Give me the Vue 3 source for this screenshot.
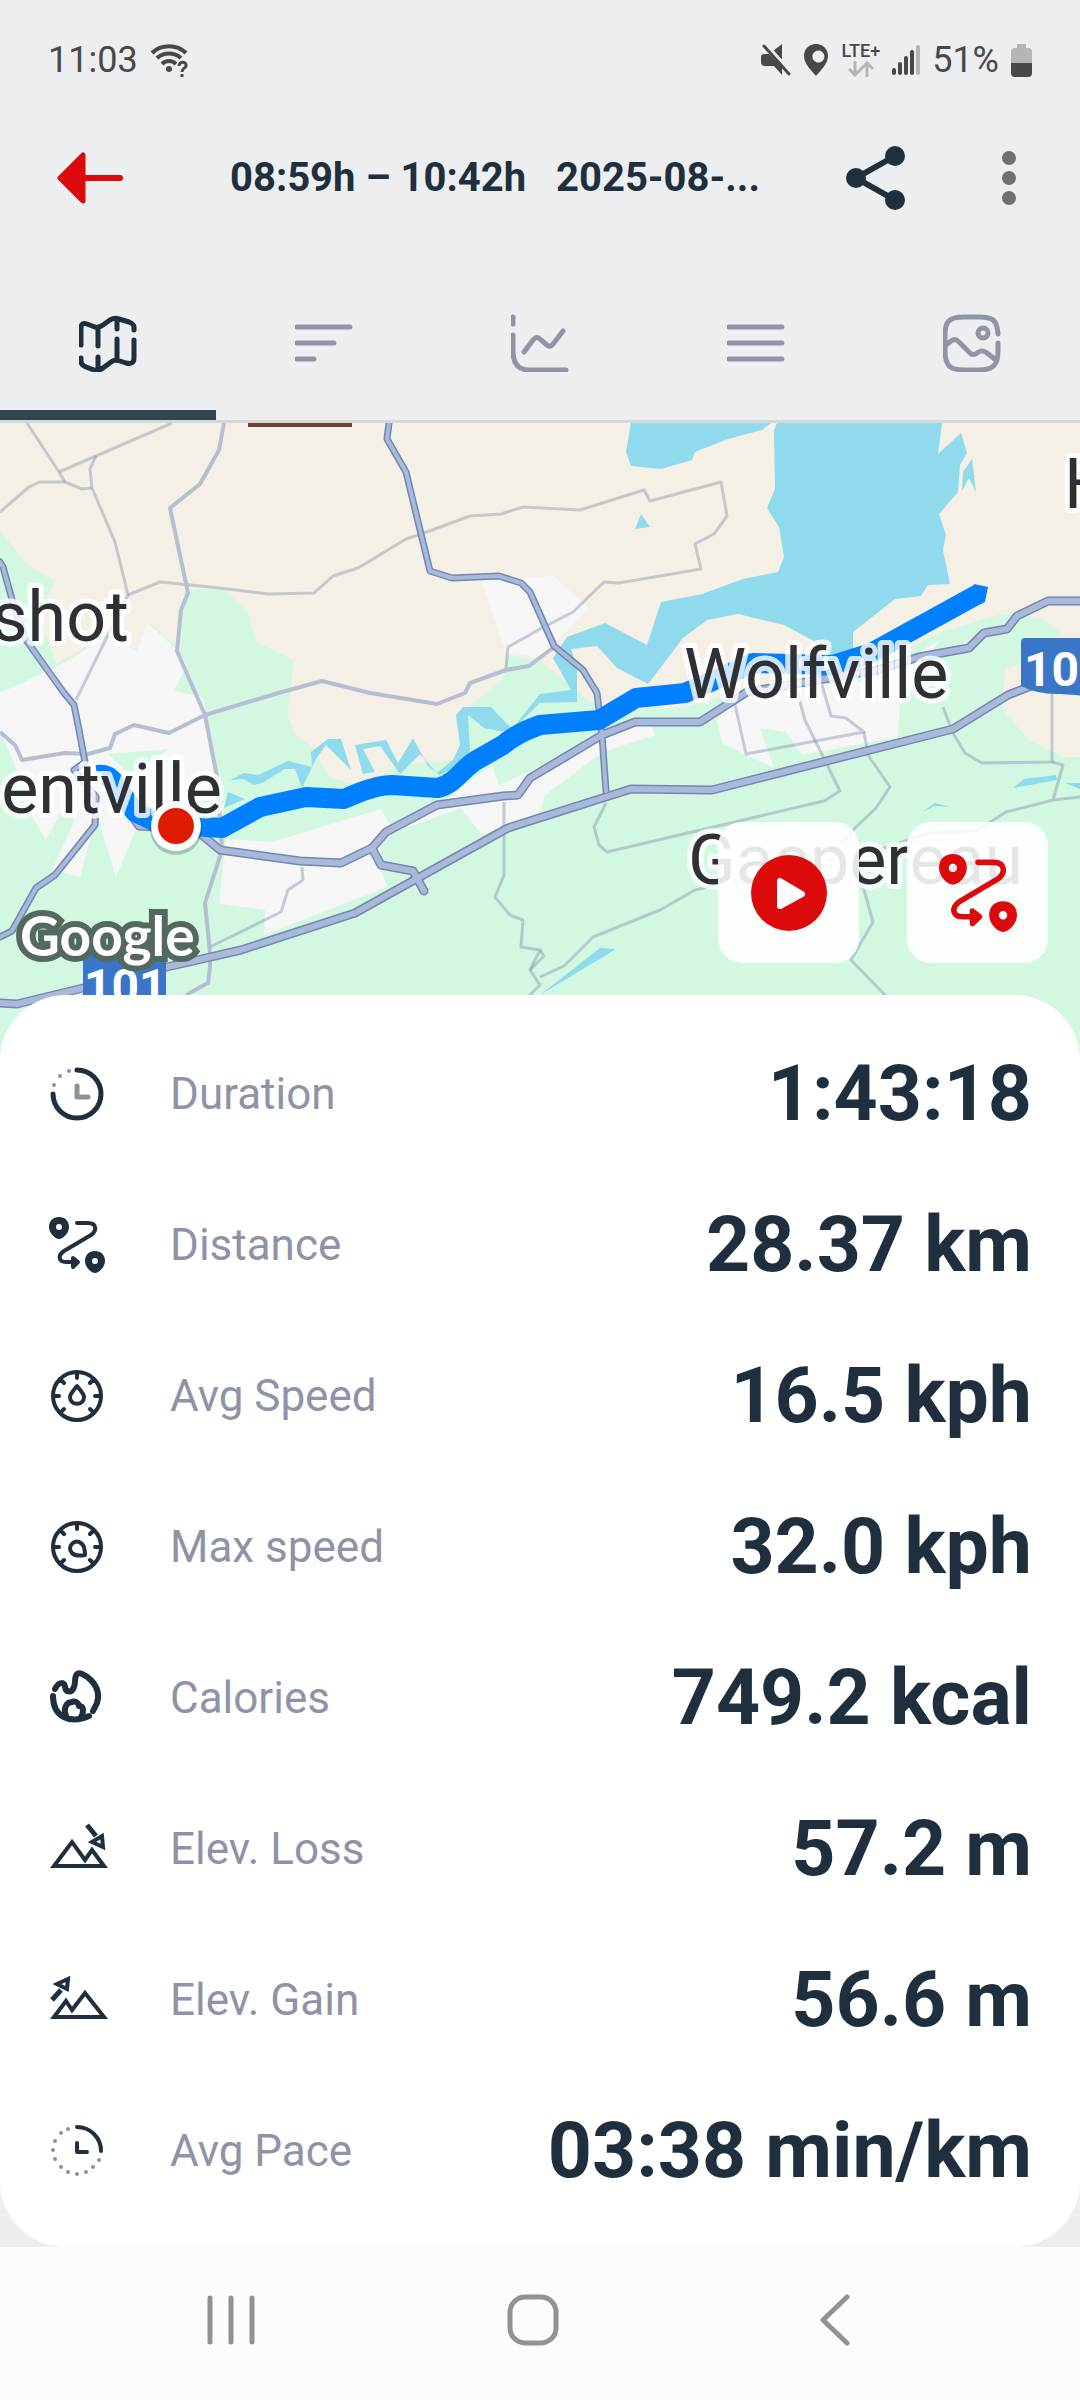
<template>
  <div class="screen">
    <header class="top">
      <div class="status-bar">
        <div class="status-group">
          <span class="clock">11:03</span>
          <svg width="38" height="36" viewBox="0 0 38 36" fill="none" stroke="#48484a" stroke-width="4">
            <path d="M2 11C11 2 27 2 36 11M7 16c7-6 17-6 24 0M12 22c4-4 10-4 14 0" />
            <circle cx="19" cy="27" r="3" fill="#48484a" stroke="none" />
            <path d="M29 24c0-5 8-5 7 0-1 3-4 2-4 6M32 32v3" stroke-width="3" />
          </svg>
        </div>
        <div class="status-group right">
          <svg width="30" height="32" viewBox="0 0 30 32" fill="#48484a">
            <path d="M12 7l9-7v16zM0 13q0-3 3-3h5l13 13v8l-8-9H4q-4 0-4-4z" />
            <path d="M5 0l26 29" stroke="#edeef0" stroke-width="3" />
            <path d="M3 2l25 28" stroke="#48484a" stroke-width="3" stroke-linecap="round" />
          </svg>
          <svg width="26" height="32" viewBox="0 0 26 32" fill="#48484a">
            <path fill-rule="evenodd" d="M13 0C6 0 1 5 1 12c0 8 8 15 12 20 4-5 12-12 12-20C25 5 20 0 13 0Zm0 7a6 6 0 1 1 0 11 6 6 0 0 1 0-11Z" />
          </svg>
          <span class="network">
            <span>LTE+</span>
            <svg width="26" height="16" viewBox="0 0 26 16" fill="none" stroke="#b4b5b7" stroke-width="3">
              <path d="M7 0v13M1 8l6 6 6-6M19 16V3M13 8l6-6 6 6" />
            </svg>
          </span>
          <svg width="28" height="32" viewBox="0 0 28 32" stroke="#48484a" stroke-width="4" stroke-linecap="round">
            <path d="M2 26v3M8 20v9M14 14v15M20 8v21" />
            <path d="M26 3v26" stroke="#b4b5b7" />
          </svg>
          <span class="clock">51%</span>
          <svg width="21" height="33" viewBox="0 0 21 33">
            <path d="M6 0h9v4h2q4 0 4 4v12H0V8q0-4 4-4h2z" fill="#b4b5b7" />
            <path d="M0 19h21v10q0 4-4 4H4q-4 0-4-4z" fill="#48484a" />
          </svg>
        </div>
      </div>

      <div class="app-bar">
        <button class="icon-btn back" aria-label="Back">
          <svg width="66" height="52" viewBox="0 0 66 52">
            <path d="M3 26L26 3v46z" fill="#dc0a0a" stroke="#dc0a0a" stroke-width="5" stroke-linejoin="round" />
            <path d="M26 26h37" stroke="#dc0a0a" stroke-width="6" stroke-linecap="round" />
          </svg>
        </button>
        <h1 class="title">
          <span>08:59h – 10:42h</span>
          <span>2025-08-...</span>
        </h1>
        <button class="icon-btn share" aria-label="Share">
          <svg width="60" height="66" viewBox="0 0 60 66" fill="#1f2f3e">
            <path d="M49 11L10 33l39 22" fill="none" stroke="#1f2f3e" stroke-width="6" />
            <circle cx="49" cy="11" r="10" /><circle cx="10" cy="33" r="10" /><circle cx="49" cy="55" r="10" />
          </svg>
        </button>
        <button class="icon-btn" aria-label="More options">
          <svg width="14" height="54" viewBox="0 0 14 54" fill="#6f7072">
            <circle cx="7" cy="7" r="7" /><circle cx="7" cy="27" r="7" /><circle cx="7" cy="47" r="7" />
          </svg>
        </button>
      </div>

      <nav class="tabs">
        <button
          v-for="(tab, index) in tabs"
          :key="tab.name"
          class="tab"
          :class="{ active: activeTab === index }"
          :aria-label="tab.name"
          @click="activeTab = index"
        >
          <svg width="58" height="58" viewBox="0 0 58 58">
            <path :d="tab.path" />
          </svg>
        </button>
      </nav>
    </header>

    <section class="map">
      <svg class="map-canvas" viewBox="0 423 1080 637" preserveAspectRatio="xMidYMin slice">
        <rect y="423" width="1080" height="637" fill="#d3f8e2" />
        <path v-for="shape in land" :key="shape.d" :d="shape.d" :fill="shape.fill" />
        <path v-for="road in smallRoads" :key="road" class="small-road" :d="road" />
        <path v-for="road in mediumRoads" :key="road" class="medium-road" :d="road" />
        <path v-for="road in mainRoads" :key="'o' + road.d" class="road-outline" :d="road.d" :stroke-width="road.width + 3" />
        <path v-for="road in mainRoads" :key="road.d" class="road-fill" :d="road.d" :stroke-width="road.width" />
        <path class="route" d="M97 775Q110 773 116 786L135 812 160 824 222 828 260 807 306 797 344 799Q375 785 392 785L438 788C455 784 462 769 475 761L503 745Q515 734 540 725L599 720 636 698 685 693 753 663 833 665 871 653 980 593" />
        <path d="M974 584L988 587 985 602 976 606Z" fill="#0080ff" />
        <rect x="248" y="423" width="104" height="4" fill="#6e4132" />

        <rect x="83" y="953" width="83" height="70" fill="#3a76c8" />
        <text class="shield" x="84" y="1003">101</text>
        <path d="M1021 642q0-4 4-4h60v58q-20-2-24-2-22 1-40-8z" fill="#3a76c8" />
        <text class="shield" x="1024" y="686">10</text>

        <text class="place" x="129" y="641" text-anchor="end">shot</text>
        <text class="place" x="222" y="813" text-anchor="end">entville</text>
        <text class="place" x="684" y="698">Wolfville</text>
        <text class="place" x="688" y="884">Gaspereau</text>
        <text class="place" x="1064" y="508">H</text>
        <text class="google" x="20" y="956">Google</text>

        <circle cx="176" cy="829" r="26" fill="#00000033" />
        <circle cx="176" cy="826" r="25" fill="#fff" />
        <circle cx="176" cy="826" r="18" fill="#de1b00" />
      </svg>
      <div class="map-actions">
        <button class="map-btn" aria-label="Play route">
          <svg width="78" height="78" viewBox="0 0 78 78">
            <circle cx="39" cy="39" r="38" fill="#dc0a0a" />
            <path d="M30 27v25l22-12z" fill="#fff" stroke="#fff" stroke-width="6" stroke-linejoin="round" />
          </svg>
        </button>
        <button class="map-btn" aria-label="Show track">
          <svg class="stat-icon red" width="78" height="78" viewBox="0 0 56 56">
            <path v-for="part in routeIcon" :key="part.d" :class="part.type" :d="part.d" />
          </svg>
        </button>
      </div>
    </section>

    <main class="card">
      <dl class="stats">
        <div v-for="stat in stats" :key="stat.label" class="stat">
          <dt>
            <svg class="stat-icon" width="56" height="56" viewBox="0 0 56 56">
              <path v-for="part in stat.icon" :key="part.d" :class="part.type" :d="part.d" />
            </svg>
            {{ stat.label }}
          </dt>
          <dd>{{ stat.value }}</dd>
        </div>
      </dl>
    </main>

    <footer class="system-nav">
      <button class="icon-btn" aria-label="Recent apps">
        <svg width="50" height="52" viewBox="0 0 50 52"><path d="M4 4v44M25 4v44M46 4v44" /></svg>
      </button>
      <button class="icon-btn" aria-label="Home">
        <svg width="52" height="52" viewBox="0 0 52 52"><rect x="3" y="3" width="46" height="46" rx="15" /></svg>
      </button>
      <button class="icon-btn" aria-label="Go back">
        <svg width="30" height="52" viewBox="0 0 30 52"><path d="M27 3L3 26l24 23" /></svg>
      </button>
    </footer>
  </div>
</template>

<script setup>
import { ref } from 'vue';

const activeTab = ref(0);

const tabs = [
  { name: 'Map', path: 'M2 31V14q0-6 6-4l8 3q4 1 8-2l7-5q5-3 9-1l10 3q5 2 5 5v3M2 44v3q0 4 5 6l8 3q5 1 9-2l8-6q4-3 9-1l6 2q8 2 8-5V26M19 14v18M19 43v13M38 5v10M38 25v21' },
  { name: 'Laps', path: 'M2 13h53M2 29h37M2 45h17' },
  { name: 'Charts', path: 'M2 3v7M2 21v16q0 19 16 19h37M13 38l9-12q4-5 8 0l6 5q3 3 6-1l10-13' },
  { name: 'Details', path: 'M2 13h53M2 29h53M2 45h53' },
  { name: 'Photos', path: 'M55 20C54 6 50 3 36 3H21C5 3 2 8 2 22v14C2 52 7 56 21 56h15C51 56 55 50 55 37v-8M35 19a5 5 0 1 0 10 0 5 5 0 0 0-10 0M3 31l5-4q4-3 8 1l11 11q3 3 7 0 5-4 10 0l9 7' }
];

const routeIcon = [
  { type: 'solid', d: 'M10 0C4 0 0 4 0 10S6 22 10 22 20 16 20 10 16 0 10 0Zm0 7a3 3 0 1 1 0 6 3 3 0 0 1 0-6Z' },
  { type: 'solid', d: 'M46 34c-6 0-10 4-10 10S42 56 46 56s10-6 10-12S52 34 46 34Zm0 7a3 3 0 1 1 0 6 3 3 0 0 1 0-6Z' },
  { type: 'line', d: 'M28 6h11c9 0 9 8 3 12L15 34c-7 5-5 11 2 11h8' },
  { type: 'solid edge', d: 'M24 41l5 4-5 5z' }
];

const gauge = 'M4 28a24 24 0 1 1 48 0 24 24 0 0 1-48 0M28 4v6M45 11l-4 4M11 11l4 4M52 28h-6M4 28h6M45 45l-4-4M11 45l4-4';

const stats = [
  {
    label: 'Duration',
    value: '1:43:18',
    icon: [
      { type: 'thick', d: 'M28 4A24 24 0 1 1 4 28' },
      { type: 'muted', d: 'M20 5h0M11 10h0M5 19h0' },
      { type: 'muted thick', d: 'M28 20v11h11' }
    ]
  },
  { label: 'Distance', value: '28.37 km', icon: routeIcon },
  {
    label: 'Avg Speed',
    value: '16.5 kph',
    icon: [
      { type: 'line', d: gauge },
      { type: 'line', d: 'M28 18c-3 4-7 8-7 11 0 9 14 9 14 0 0-3-4-7-7-11Z' }
    ]
  },
  {
    label: 'Max speed',
    value: '32.0 kph',
    icon: [
      { type: 'line', d: gauge },
      { type: 'line', d: 'M36 36c-5 1-10 1-13-2-6-6 3-16 10-9 2 2 3 7 3 11Z' }
    ]
  },
  {
    label: 'Calories',
    value: '749.2 kcal',
    icon: [
      { type: 'heavy', d: 'M6 19c4-8 10-7 10-2 1 6 7 6 9 0 2-5 0-10 3-13 4-4 26 10 20 29l-4 8M4 26c0 22 18 28 36 20' },
      { type: 'heavy', d: 'M17 46c-3-7 0-14 6-14 4-2 7 2 7 4 5 0 5 6 2 11' }
    ]
  },
  {
    label: 'Elev. Loss',
    value: '57.2 m',
    icon: [
      { type: 'sharp', d: 'M5 45L23 21 36 39 43 29 55 45Z' },
      { type: 'shaft', d: 'M38 4l9 11' },
      { type: 'sharp', d: 'M43 21l10-6 1 11z' }
    ]
  },
  {
    label: 'Elev. Gain',
    value: '56.6 m',
    icon: [
      { type: 'sharp', d: 'M5 45L17 29l6 9L36 21 55 45Z' },
      { type: 'shaft', d: 'M3 28l9-10' },
      { type: 'sharp', d: 'M8 12l11-5-1 10z' }
    ]
  },
  {
    label: 'Avg Pace',
    value: '03:38 min/km',
    icon: [
      { type: 'line', d: 'M28 4A24 24 0 0 1 52 28M28 20v9h10' },
      { type: 'muted', d: 'M19 6h0M12 10h0M6 18h0M4 27h0M6 36h0M12 44h0M19 49h0M28 51h0M37 49h0M44 44h0M50 37h0' }
    ]
  }
];

const sand = '#f5f0e5';
const town = '#f6f6f6';
const water = '#90daee';

const land = [
  { fill: sand, d: 'M0 423H1080V757H1063L1029 740 1003 710 1005 670 1050 650 1060 632 1039 617 1001 614 940 632 915 645 853 668 748 690 685 707 620 710 590 702 540 660 506 655 480 585 470 571 481 583 506 655 502 680 465 710 457 760 400 765 360 785 330 778 310 745 295 735 288 715 294 660 256 642 248 612 222 588 185 590 180 650 148 621 137 650 107 635 56 664 40 615 55 581 25 563 0 530Z' },
  { fill: town, d: 'M0 693L60 665 107 637 137 651 147 622 178 651 187 665 174 691 203 697 215 765 222 790 140 820 116 877 97 815 80 877 52 870 75 820 62 810 46 840 22 800 15 765 0 730Z' },
  { fill: '#d3f8e2', d: 'M108 754L170 749 130 775Z' },
  { fill: town, d: 'M481 580L553 576 589 608 540 658 506 652Z' },
  { fill: town, d: 'M226 839L272 842 381 809 392 828 437 805 492 765 499 785 625 728 650 722 655 735 603 752 545 795 540 812 482 835 461 808 386 835 378 860 387 887 264 935 265 910 219 904Z' },
  { fill: town, d: 'M717 720L722 743 774 768 760 728 786 732 802 755 898 737 900 693 940 640 870 680 740 695Z' },
  { fill: water, d: 'M631 423L626 452 631 466 661 469 692 460 695 452 728 439 762 430 771 423Z' },
  { fill: water, d: 'M777 423L774 430 775 489 767 508 779 527 784 557 778 572 743 579 702 594 661 602 647 645 605 623 567 637 553 658 571 690 540 694V703L577 702V668L571 649 597 646 617 668 648 684 683 638 707 620 738 614 784 625 812 640 833 660 853 655V632L895 599 921 596 928 585 950 584 943 550 946 535 939 514 958 492 960 465 967 453 961 433 938 454 942 423Z' },
  { fill: water, d: 'M963 472L972 459 976 492 969 478 962 491Z' },
  { fill: water, d: 'M641 514L650 527 635 529Z' },
  // river bends between the bay and the town
  { fill: water, d: 'M540 694L513 728 508 725 491 707H463L456 715 460 745 453 760 437 773 428 766 413 738 398 763 386 740 355 745 363 774 375 772 363 749 380 746 400 774 413 761 420 754 439 775 458 766 470 752 468 715 484 728 500 731 511 731 540 703Z' },
  { fill: water, d: 'M230 780L244 773 258 775 288 761 312 767 311 752 328 739 341 739 351 770 326 745 316 759 302 788 295 769 285 769 262 783 254 785 243 779Z' },
  { fill: water, d: 'M228 792L245 799 224 808Z' },
  { fill: water, d: 'M600 948L616 949 540 995Z' },
  { fill: water, d: 'M1013 788L1024 779 1056 775 1057 780Z' },
  { fill: water, d: 'M1065 783L1080 783V789Z' },
  { fill: water, d: 'M922 812L935 803 950 807 935 806Z' }
];

const smallRoads = [
  'M27 423L59 472 65 482',
  'M172 423L96 456 59 472',
  'M0 512L29 487 40 482H65L82 489 92 488',
  'M96 456L90 469 92 488 115 542 128 595 107 637 76 700',
  'M128 595L160 582 220 588 269 594 314 593 333 576 358 568 406 539 424 533 470 516 501 514 523 507 580 510 644 490 650 501 721 482 727 516 714 534 695 544 701 569 619 583 604 582 573 612 540 629 508 647 506 668',
  'M734 700L746 754 864 732 846 718 831 716 822 685',
  'M796 687L805 720 840 791 824 801 607 852 599 845 594 827 606 803',
  'M864 732L868 755 890 787 876 808 855 828 840 845 864 890 873 922 851 960 885 995 900 1010',
  'M943 707L953 733 965 753 982 763 1052 762V690',
  'M1052 762L1063 765 1053 800M1080 797L1053 800 1006 812 976 831 929 833 884 848 695 890 660 910 593 937 564 966 540 977',
  'M504 802V875L495 897 510 915 523 920 521 947 540 950 530 970 540 985 525 1000',
  'M302 867L303 880 288 890 281 912 210 947',
  'M540 950L544 956 530 970'
];

const mediumRoads = [
  'M224 423L219 450 200 484 170 508 188 593 181 610 177 651 205 715 217 777 222 850 205 903 210 953V967L208 983 186 995',
  'M0 732L15 745 22 760 65 753 88 754 110 748 115 734 134 725 169 733 205 715 275 694 322 681 370 693 437 704 465 693 470 683 506 670 529 666 554 647'
];

const mainRoads = [
  { width: 4, d: 'M389 423L387 439 406 472 430 571 452 578 499 576 521 583 530 592 554 646 583 670 597 693 602 735 606 791' },
  { width: 4, d: 'M0 562L3 567 13 603 26 640 64 693 74 705 79 730 85 762 74 770 96 797 95 825 55 875 36 888 12 931 0 937' },
  { width: 6, d: 'M121 800L139 826 196 830 220 850 300 861 341 863 372 848 386 832 437 805 503 796 518 795 530 778 602 735 635 722H700L747 692 877 670 919 657 969 648 984 633 1007 629 1017 616 1048 601H1080' },
  { width: 6, d: 'M372 848L381 865 413 871 424 891' },
  { width: 6, d: 'M0 1003L17 1004 83 988 167 967 241 950 355 913 508 828 631 789 712 790 953 729 1008 695 1080 667' }
];
</script>

<style>
body {
  background-color: #edeef0;
}
</style>

<style scoped>
.screen {
  display: flex;
  flex-direction: column;
  min-height: 100vh;
  font-family: Roboto, "Liberation Sans", sans-serif;
  color: #1f2f3e;
}

button {
  padding: 0;
  border: none;
  background: none;
  color: inherit;
  cursor: pointer;
}

svg {
  display: block;
}

.top {
  border-bottom: 3px solid #d6d7d8;
}

.status-bar {
  display: flex;
  justify-content: space-between;
  align-items: center;
  padding: 36px 48px 0 48px;
  color: #48484a;
}

.status-group {
  display: flex;
  align-items: center;
  gap: 12px;
}

.clock {
  font-size: 36px;
  line-height: 48px;
}

.network {
  display: flex;
  flex-direction: column;
  align-items: center;
  gap: 2px;
  font-size: 18px;
  font-weight: 500;
  line-height: 16px;
}

.app-bar {
  display: flex;
  align-items: center;
  height: 188px;
  padding: 0 64px 0 57px;
}

.icon-btn {
  display: flex;
  justify-content: center;
  align-items: center;
}

.title {
  flex: 1;
  display: flex;
  gap: 30px;
  margin: 0 0 0 107px;
  font-size: 40px;
  line-height: 48px;
  white-space: nowrap;
}

.share {
  margin-right: 96px;
}

.tabs {
  display: flex;
}

.tab {
  flex: 1;
  display: flex;
  justify-content: center;
  padding: 42px 0 38px;
  border-bottom: 10px solid transparent;
}

.tab svg {
  fill: none;
  stroke: #9095a6;
  stroke-width: 5;
  stroke-linecap: round;
  stroke-linejoin: round;
}

.tab.active {
  border-bottom-color: #34444f;
}

.tab.active svg {
  stroke: #1f2f3e;
}

.map {
  position: relative;
}

.map-canvas {
  width: 100%;
}

.map-canvas path {
  stroke-linejoin: round;
}

.small-road {
  fill: none;
  stroke: #8088a8;
  stroke-opacity: 0.4;
  stroke-width: 3;
}

.medium-road {
  fill: none;
  stroke: #b5bfd1;
  stroke-width: 4;
}

.road-outline {
  fill: none;
  stroke: #7286b2;
  stroke-linecap: round;
}

.road-fill {
  fill: none;
  stroke: #a9b9da;
  stroke-linecap: round;
}

.route {
  fill: none;
  stroke: #0080ff;
  stroke-width: 20;
}

.place {
  font-size: 70px;
  fill: #2f3033;
  stroke: #ffffffcc;
  stroke-width: 10px;
  stroke-linejoin: round;
  paint-order: stroke;
}

.shield {
  font-size: 48px;
  font-weight: 700;
  fill: #fff;
}

.google {
  font-family: Lato, sans-serif;
  font-size: 55px;
  font-weight: 700;
  fill: #fff;
  stroke: #53695e;
  stroke-width: 12px;
  paint-order: stroke;
}

.map-actions {
  position: absolute;
  right: 32px;
  bottom: 97px;
  display: flex;
  gap: 48px;
}

.map-btn {
  display: flex;
  justify-content: center;
  align-items: center;
  width: 141px;
  height: 141px;
  border-radius: 24px;
  background-color: rgba(255, 255, 255, 0.88);
}

.card {
  position: relative;
  flex: 1;
  margin-top: -65px;
  padding: 24px 48px 20px 49px;
  border-radius: 66px;
  background-color: #fff;
}

.stats {
  margin: 0;
}

.stat {
  display: flex;
  justify-content: space-between;
  align-items: center;
  padding: 27px 0 28px;
}

.stat dt {
  display: flex;
  align-items: center;
  gap: 65px;
  font-size: 44px;
  line-height: 56px;
  color: #8e93a7;
}

.stat dd {
  margin: 0;
  font-size: 77px;
  font-weight: 700;
  line-height: 96px;
}

.stat-icon {
  fill: none;
  stroke: #1f2f3e;
  stroke-width: 4;
  stroke-linecap: round;
  stroke-linejoin: round;
  overflow: visible;
}

.stat-icon .solid {
  fill: #1f2f3e;
  fill-rule: evenodd;
  stroke: none;
}

.stat-icon .edge {
  stroke: #1f2f3e;
}

.stat-icon .thick,
.stat-icon .shaft {
  stroke-width: 5;
}

.stat-icon .heavy {
  stroke-width: 6;
}

.stat-icon .muted {
  stroke: #8c929b;
}

.stat-icon .sharp,
.stat-icon .shaft {
  stroke-linecap: butt;
  stroke-linejoin: miter;
}

.stat-icon.red,
.stat-icon.red .edge {
  stroke: #dc0a0a;
}

.stat-icon.red .solid {
  fill: #dc0a0a;
}

.system-nav {
  display: flex;
  padding: 47px 94px 54px 80px;
  background-color: #fcfcfd;
}

.system-nav .icon-btn {
  flex: 1;
}

.system-nav svg {
  fill: none;
  stroke: #929292;
  stroke-width: 5;
  stroke-linecap: round;
  stroke-linejoin: round;
}
</style>
